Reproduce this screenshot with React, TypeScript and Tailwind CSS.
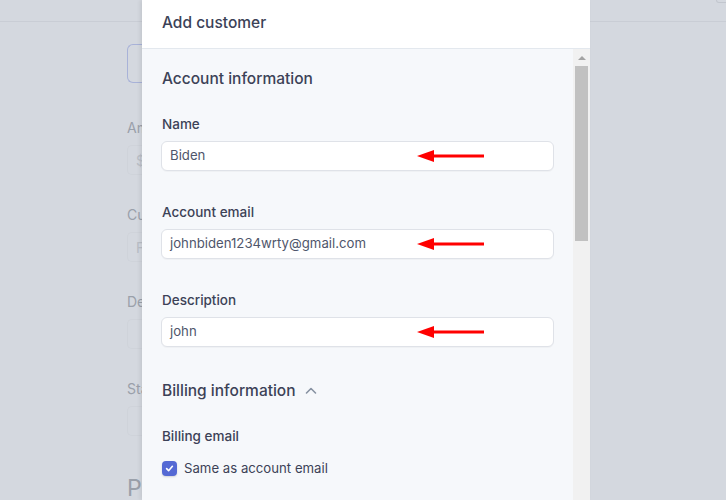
import React from "react";

type FieldProps = {
  label: string;
  value: string;
};

const Arrow = () => (
  <svg
    className="absolute left-[255px] top-[6px]"
    width="67"
    height="16"
    viewBox="0 0 67 16"
  >
    <path d="M16 6.5h51v3H16z" fill="#ff0000" />
    <path d="M0 8 L17 2 L17 14 Z" fill="#ff0000" />
  </svg>
);

const Field: React.FC<FieldProps> = ({ label, value }) => (
  <div className="flex flex-col">
    <label className="text-[13.5px] leading-5 font-medium text-[#3c4257]">{label}</label>
    <div className="relative -ml-[1px] mt-[7px] h-[30px] rounded-[6px] border border-[#dfe2e8] bg-white px-[8px] flex items-center shadow-[0_1px_1px_rgba(0,0,0,0.03)]">
      <span className="text-[13.2px] text-[#4f566b]">{value}</span>
      <Arrow />
    </div>
  </div>
);

const GhostField = ({ label, hint }: { label: string; hint?: string }) => (
  <div className="flex flex-col">
    <span className="text-[14px] leading-5 text-[#9aa0aa]">{label}</span>
    <div className="mt-[7px] h-[30px] w-[15px] rounded-l-[5px] border border-r-0 border-[#cfd3da] flex items-center pl-[8px] text-[14px] text-[#b9bec6]">
      {hint}
    </div>
  </div>
);

export default function App() {
  return (
    <div
      className="relative w-[726px] h-[500px] overflow-hidden bg-[#d4d8df]"
      style={{ fontFamily: "Inter, 'Noto Sans', sans-serif" }}
    >
      {/* page behind the drawer */}
      <div className="h-[22px] border-b border-[#c9cdd5] flex justify-end">
        <div className="w-[20px] h-[3px] mr-[-10px] rounded-b border border-t-0 border-[#c2c6ce]" />
      </div>
      <div className="pl-[127px] pt-[22px] flex flex-col">
        <div className="h-[39px] w-[15px] rounded-l-[6px] border border-r-0 border-[#a8b2d8]" />
        <div className="mt-[35px] flex flex-col gap-[30px]">
          <GhostField label="Am" hint="$" />
          <GhostField label="Cu" hint="F" />
          <GhostField label="De" />
          <GhostField label="Sta" />
        </div>
        <div className="mt-[36px] text-[23px] leading-8 text-[#9aa0aa]">Pa</div>
      </div>

      {/* drawer */}
      <div className="absolute left-[142px] top-0 w-[448px] h-[500px] flex flex-col bg-white shadow-[-2px_0_4px_rgba(0,0,0,0.08)]">
        <div className="h-[49px] shrink-0 border-b border-[#e3e8ee] pl-[20px] flex items-center">
          <span className="text-[15.5px] text-[#3c4257] font-medium pb-[2px]">Add customer</span>
        </div>
        <div className="flex flex-1 min-h-0 bg-[#f6f8fb]">
          <div className="flex-1 pl-[20px] pr-[19px] pt-[17px] flex flex-col">
            <h2 className="text-[15.5px] leading-6 font-medium text-[#3c4257] translate-y-[1px]">Account information</h2>
            <div className="mt-[24px] flex flex-col gap-[31px]">
              <Field label="Name" value="Biden" />
              <Field label="Account email" value="johnbiden1234wrty@gmail.com" />
              <Field label="Description" value="john" />
            </div>
            <div className="mt-[32px] flex items-center gap-[8px]">
              <h2 className="text-[15.5px] leading-6 font-medium text-[#3c4257]">Billing information</h2>
              <svg width="14" height="14" viewBox="0 0 14 14" fill="none">
                <path d="M2.5 9 L7 4.5 L11.5 9" stroke="#8792a2" strokeWidth="1.6" strokeLinecap="round" strokeLinejoin="round" />
              </svg>
            </div>
            <div className="mt-[23px] text-[13.5px] leading-5 font-medium text-[#3c4257]">Billing email</div>
            <div className="mt-[12px] flex items-center gap-[7px]">
              <span className="w-[15px] h-[15px] rounded-[4px] bg-[#5469d4] flex items-center justify-center shadow-[0_1px_2px_rgba(0,0,0,0.15)]">
                <svg width="9" height="9" viewBox="0 0 10 10" fill="none">
                  <path d="M1.8 5.2 L4 7.4 L8.2 2.6" stroke="white" strokeWidth="1.8" strokeLinecap="round" strokeLinejoin="round" />
                </svg>
              </span>
              <span className="text-[13.2px] leading-5 text-[#3c4257]">Same as account email</span>
            </div>
          </div>
          {/* scrollbar */}
          <div className="w-[17px] shrink-0 bg-[#f1f1f1] flex flex-col items-center">
            <svg className="mt-[6px]" width="8" height="5" viewBox="0 0 8 5">
              <path d="M0 5 L4 1 L8 5 Z" fill="#a3a3a3" />
            </svg>
            <div className="mt-[6px] w-[13px] h-[175px] bg-[#c1c1c1]" />
          </div>
        </div>
      </div>
    </div>
  );
}
